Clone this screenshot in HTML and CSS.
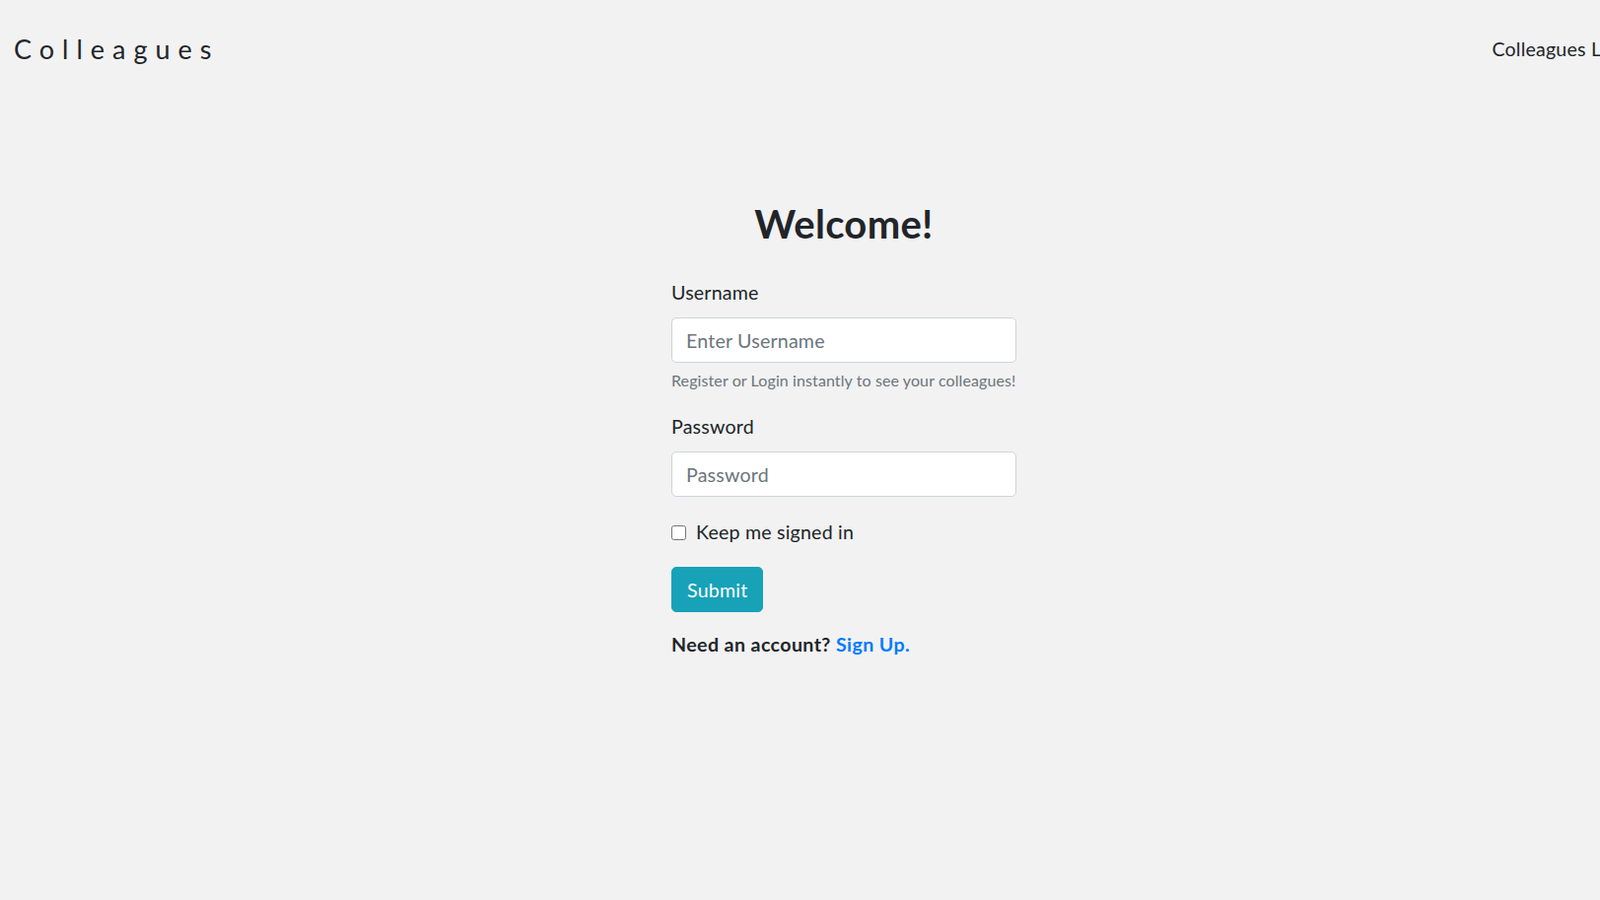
FILE: index.html
```html
<!DOCTYPE html>
<html lang="en">
<head>
  <meta charset="UTF-8" />
  <meta name="viewport" content="width=device-width, initial-scale=1" />
  <title>Colleagues - Login</title>
  <link rel="stylesheet" href="styles.css">
</head>
<body>
  <div class="page">
    <header class="navbar">
      <a class="brand" href="#">Colleagues</a>
      <nav>
        <a href="#">Colleagues List</a>
      </nav>
    </header>

    <main class="login">
      <h2>Welcome!</h2>
      <form id="loginForm">
        <div class="form-group">
          <label for="username">Username</label>
          <input type="text" id="username" name="username" placeholder="Enter Username" />
          <small class="form-text">Register or Login instantly to see your colleagues!</small>
        </div>

        <div class="form-group">
          <label for="password">Password</label>
          <input type="password" id="password" name="password" placeholder="Password" />
        </div>

        <div class="form-check">
          <input type="checkbox" id="keep" name="keep" />
          <label for="keep">Keep me signed in</label>
        </div>

        <button type="submit">Submit</button>

        <p class="signup">Need an account? <a href="#">Sign Up.</a></p>
      </form>
    </main>
  </div>
</body>
</html>
```

FILE: styles.css
```css
:root {
  --text: #212529;
  --muted: #6c757d;
  --info: #17a2b8;
  --link: #007bff;
  --border: #ced4da;
  --bg: #f2f2f2;
  --radius: 5px;
}
* {
  box-sizing: border-box;
}
html {
  overflow: hidden;
}
body {
  margin: 0;
  font-family: Lato, 'Open Sans', sans-serif;
  color: var(--text);
  background-color: var(--bg);
}
.page {
  width: 1712px;
}
.navbar {
  display: flex;
  justify-content: space-between;
  align-items: center;
  height: 70px;
  padding: 30px 67px 0 14px;
}
.brand {
  font-size: 27px;
  line-height: 40px;
  letter-spacing: 8px;
  color: var(--text);
  text-decoration: none;
}
nav a {
  font-size: 19.6px;
  line-height: 40px;
  letter-spacing: 0.2px;
  color: var(--text);
  text-decoration: none;
}
.login {
  width: 350px;
  margin: 134px auto 0;
}
.login h2 {
  margin: 0 0 33px;
  font-size: 40px;
  line-height: 46px;
  font-weight: 700;
  text-align: center;
  letter-spacing: 0.3px;
}
.form-group label,
.form-check label {
  display: block;
  font-size: 19.6px;
  line-height: 28px;
  letter-spacing: 0.2px;
}
.form-group label {
  margin-bottom: 11px;
}
.form-group input {
  display: block;
  width: 100%;
  height: 46px;
  padding: 0 14px;
  border: 1px solid var(--border);
  border-radius: var(--radius);
  background: #fff;
  font-family: inherit;
  font-size: 19.6px;
  letter-spacing: 0.2px;
  color: var(--text);
}
.form-group input::placeholder {
  color: var(--muted);
}
.form-text {
  display: block;
  margin-top: 7px;
  font-size: 16px;
  line-height: 22px;
  letter-spacing: 0.1px;
  color: var(--muted);
}
.form-group + .form-group {
  margin-top: 22px;
}
.form-check {
  display: flex;
  align-items: center;
  margin-top: 22px;
}
.form-check input {
  width: 15px;
  height: 15px;
  margin: 0 10px 0 0;
}
button {
  display: block;
  margin-top: 21px;
  padding: 9px 15px 7px;
  border: 1px solid var(--info);
  border-radius: var(--radius);
  background-color: var(--info);
  color: #fff;
  font-family: inherit;
  font-size: 19.6px;
  line-height: 28px;
  letter-spacing: 0.2px;
  cursor: pointer;
}
.signup {
  margin: 19px 0 0;
  font-size: 19.6px;
  line-height: 28px;
  font-weight: 700;
  letter-spacing: 0.4px;
}
.signup a {
  color: var(--link);
  text-decoration: none;
}
```
